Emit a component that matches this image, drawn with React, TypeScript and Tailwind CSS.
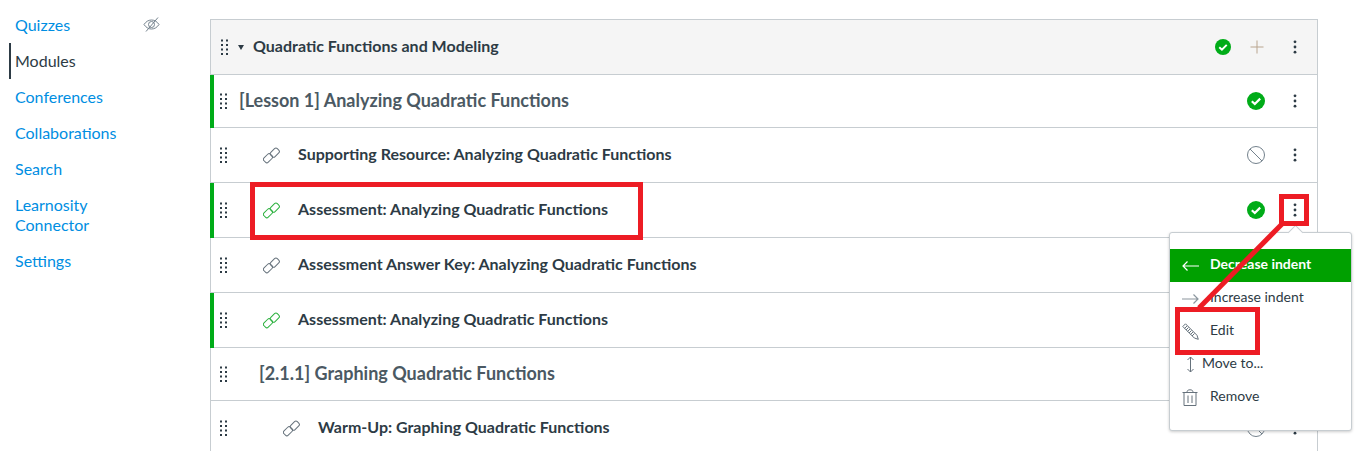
import type { ReactNode } from "react";

type Row = {
  title: string;
  indent: number;
  published?: boolean;
  status?: "check" | "none" | "off";
  kind: "header" | "title" | "link";
};

const navItems = ["Quizzes", "Modules", "Conferences", "Collaborations", "Search", "Learnosity Connector", "Settings"];

const rows: Row[] = [
  { title: "[Lesson 1] Analyzing Quadratic Functions", indent: 0, published: true, status: "check", kind: "title" },
  { title: "Supporting Resource: Analyzing Quadratic Functions", indent: 0, status: "off", kind: "link" },
  { title: "Assessment: Analyzing Quadratic Functions", indent: 0, published: true, status: "check", kind: "link" },
  { title: "Assessment Answer Key: Analyzing Quadratic Functions", indent: 0, status: "off", kind: "link" },
  { title: "Assessment: Analyzing Quadratic Functions", indent: 0, published: true, status: "check", kind: "link" },
  { title: "[2.1.1] Graphing Quadratic Functions", indent: 20, status: "off", kind: "title" },
  { title: "Warm-Up: Graphing Quadratic Functions", indent: 20, status: "off", kind: "link" },
];

const Grip = () => (
  <svg width="9" height="16" viewBox="0 0 9 16" className="shrink-0 text-[#2d3b45]" fill="currentColor">
    {[0.5, 5, 9.5, 14].map((y) => (
      <g key={y}>
        <rect x="1" y={y} width="2" height="2" />
        <rect x="6" y={y} width="2" height="2" />
      </g>
    ))}
  </svg>
);

const Kebab = () => (
  <svg width="4" height="14" viewBox="0 0 4 14" className="text-[#2d3b45]" fill="currentColor">
    <circle cx="2" cy="1.8" r="1.4" />
    <circle cx="2" cy="7" r="1.4" />
    <circle cx="2" cy="12.2" r="1.4" />
  </svg>
);

const CheckDot = ({ size }: { size: number }) => (
  <svg width={size} height={size} viewBox="0 0 18 18">
    <circle cx="9" cy="9" r="9" fill="#00ac18" />
    <path d="M4.8 9.2 7.8 12 13.2 6.6" fill="none" stroke="#fff" strokeWidth="2.2" />
  </svg>
);

const Prohibit = () => (
  <svg width="18" height="18" viewBox="0 0 18 18" fill="none" stroke="#73818c" strokeWidth="1">
    <circle cx="9" cy="9" r="8.5" />
    <path d="M3 3 15 15" />
  </svg>
);

const LinkIcon = ({ green }: { green?: boolean }) => (
  <svg width="17" height="17" viewBox="0 0 17 17" fill="none" stroke={green ? "#2bb13e" : "#66727c"} strokeWidth="1">
    <rect x="0.4" y="8.200" width="9.200" height="6" rx="2" transform="rotate(-45 5 11.200)" />
    <rect x="7.200" y="2.600" width="9.200" height="6" rx="2" transform="rotate(-45 11.800 5.600)" />
  </svg>
);

const EyeOff = () => (
  <svg width="17" height="15" viewBox="0 0 17 15" fill="none" stroke="#73818c" strokeWidth="1">
    <path d="M1 7.500C3 4.500 5.500 3 8.500 3s5.500 1.500 7.500 4.500C14 10.500 11.500 12 8.500 12S3 10.500 1 7.500Z" />
    <circle cx="8.500" cy="7.500" r="3" />
    <path d="M15 .5 3 14.500" />
  </svg>
);

const ArrowLeft = ({ color }: { color: string }) => (
  <svg width="17" height="10" viewBox="0 0 17 10" fill="none" stroke={color} strokeWidth="1.2">
    <path d="M17 5H1M5.500 .5 1 5l4.500 4.500" />
  </svg>
);

const ArrowRight = () => (
  <svg width="17" height="10" viewBox="0 0 17 10" fill="none" stroke="#8b969e" strokeWidth="1.2">
    <path d="M0 5h16M11.500 .5 16 5l-4.500 4.500" />
  </svg>
);

const Pencil = () => (
  <svg width="17" height="17" viewBox="0 0 17 17" fill="none" stroke="#66727c" strokeWidth="1">
    <path d="M.8 3.500 3.500 .8l11.500 11.500 1.300 4-4-1.300Z" />
    <path d="M5 3 2.500 5.500M6.500 4.500 4 7M8 6 5.500 8.500M9.500 7.500 7 10M11 9 8.500 11.500M12.500 10.500 10 13" />
  </svg>
);

const UpDown = () => (
  <svg width="9" height="17" viewBox="0 0 9 17" fill="none" stroke="#66727c" strokeWidth="1">
    <path d="M4.500 1v15M1.500 4 4.500 1l3 3M1.500 13l3 3 3-3" />
  </svg>
);

const Trash = () => (
  <svg width="16" height="17" viewBox="0 0 16 17" fill="none" stroke="#66727c" strokeWidth="1">
    <path d="M.5 3.500h15M5 3.500C5 1.500 6 .8 8 .8s3 .7 3 2.700M2 3.500v13h12v-13M6 6.500v7.500M10 6.500v7.500" />
  </svg>
);

const MenuItem = ({ icon, label, active, tight }: { icon: ReactNode; label: string; active?: boolean; tight?: boolean }) => (
  <div className={`flex h-[33px] items-center text-[14px] ${active ? "bg-[#00a000] font-bold text-white" : "text-[#2d3b45]"}`}>
    <span className="flex w-[40px] shrink-0 justify-center">
      <span className="flex w-[17px] justify-center">{icon}</span>
    </span>
    <span className={`mb-[5px] ${tight ? "-ml-[8px]" : ""}`}>{label}</span>
  </div>
);

const ModuleRow = ({ row }: { row: Row }) => (
  <div
    className={`relative flex items-center border-b border-[#c7cdd1] text-[#2d3b45] ${row.kind === "title" ? "h-[53px]" : "h-[55px]"}`}
  >
    {row.published && <span className="absolute -bottom-px left-[-1px] top-0 w-1 bg-[#00ac18]" />}
    <span className="ml-[8px] flex w-[9px] justify-center">
      <Grip />
    </span>
    {row.kind === "link" ? (
      <div className="flex items-center" style={{ marginLeft: row.indent }}>
        <span className="ml-[35px] mr-[18px]">
          <LinkIcon green={row.published} />
        </span>
        <span className="mb-[2px] font-bold text-[16px]">{row.title}</span>
      </div>
    ) : (
      <span className="mb-[2px] font-bold text-[18px] text-[#4b5963]" style={{ marginLeft: 11 + row.indent }}>
        {row.title}
      </span>
    )}
    <div className="ml-auto flex items-center">
      <span className="flex w-[18px] justify-center">
        {row.status === "check" && <CheckDot size={18} />}
        {row.title.startsWith("Supporting") && <Prohibit />}
        {row.title.startsWith("Warm") && <Prohibit />}
      </span>
      <span className="ml-[27px] mr-[20px] flex w-[5px] justify-center">
        <Kebab />
      </span>
    </div>
  </div>
);

export default function App() {
  return (
    <div className="relative flex h-[451px] w-[1359px] overflow-hidden bg-white font-['Lato',sans-serif]">
      <aside className="w-[210px] shrink-0 pl-[9px] pt-[7px]">
        {navItems.map((item) => {
          const active = item === "Modules";
          return (
            <div
              key={item}
              className={`relative flex min-h-9 items-center border-l-2 pl-1 text-[16px] leading-[20px] ${
                active ? "border-[#2d3b45] text-[#2d3b45]" : "border-transparent text-[#008ee2]"
              } ${item === "Learnosity Connector" ? "h-[56px] w-[110px]" : "h-9"}`}
            >
              {item}
              {item === "Quizzes" && (
                <span className="absolute left-[132px] top-[10px]">
                  <EyeOff />
                </span>
              )}
            </div>
          );
        })}
      </aside>

      <main className="mt-[19px] h-[500px] w-[1108px] shrink-0 border-x border-t border-[#c7cdd1]">
        <div className="flex h-[55px] items-center border-b border-[#c7cdd1] bg-[#f5f5f5] text-[#2d3b45]">
          <span className="ml-[9px] flex w-[9px] justify-center">
            <Grip />
          </span>
          <span className="ml-[9px] mr-[9px] h-0 w-0 border-x-[3.5px] border-t-[5px] border-x-transparent border-t-[#2d3b45]" />
          <span className="mb-[2px] font-bold text-[16px]">Quadratic Functions and Modeling</span>
          <div className="ml-auto flex items-center">
            <CheckDot size={16} />
            <svg width="14" height="14" viewBox="0 0 14 14" className="ml-[19px]" stroke="#b9a58f" strokeWidth="1">
              <path d="M7 .5v13M.5 7h13" />
            </svg>
            <span className="ml-[28px] mr-[20px] flex w-[5px] justify-center">
              <Kebab />
            </span>
          </div>
        </div>
        {rows.map((row, i) => (
          <ModuleRow key={i} row={row} />
        ))}
      </main>

      {/* popup menu */}
      <div className="absolute left-[1169px] top-[232px] h-[199px] w-[183px] rounded-[3px] border border-[#c7cdd1] bg-white py-[16px] shadow-[0_1px_3px_rgba(0,0,0,0.2)]">
        <span className="absolute left-[120px] top-[-6px] h-[11px] w-[11px] rotate-45 border-l border-t border-[#c7cdd1] bg-white" />
        <MenuItem icon={<ArrowLeft color="#fff" />} label="Decrease indent" active />
        <MenuItem icon={<ArrowRight />} label="Increase indent" />
        <MenuItem icon={<Pencil />} label="Edit" />
        <MenuItem icon={<UpDown />} label="Move to..." tight />
        <MenuItem icon={<Trash />} label="Remove" />
      </div>

      {/* red annotations */}
      <span className="absolute left-[250px] top-[182px] h-[58px] w-[393px] border-[5px] border-[#ed1c24]" />
      <span className="absolute left-[1279px] top-[194px] h-[32px] w-[30px] border-[5px] border-[#ed1c24]" />
      <span className="absolute left-[1175px] top-[307px] h-[48px] w-[85px] border-[5px] border-[#ed1c24]" />
      <svg width="1359" height="451" className="pointer-events-none absolute left-0 top-0">
        <path d="M1282 224 1199 308" stroke="#ed1c24" strokeWidth="5" />
      </svg>
    </div>
  );
}
